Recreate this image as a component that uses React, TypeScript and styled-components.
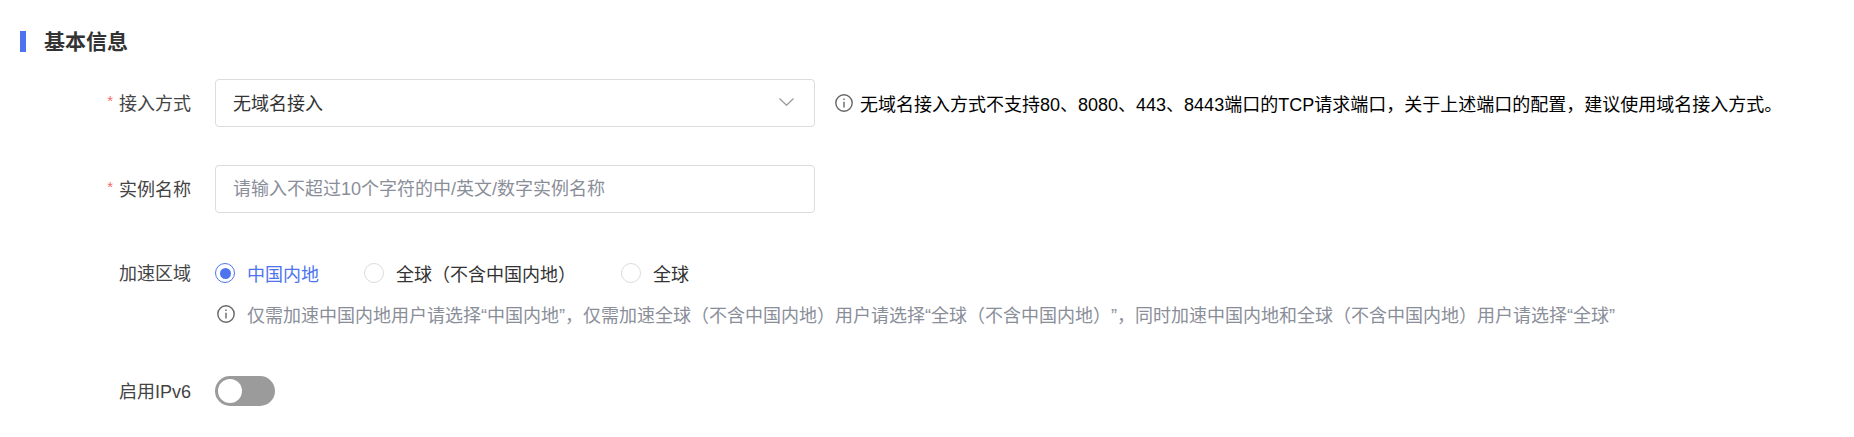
import styled, { createGlobalStyle } from 'styled-components'

const GlobalStyle = createGlobalStyle`
	body {
		margin: 0;
		background: #fff;
		font-family: 'Liberation Sans', 'Noto Sans CJK SC', sans-serif;
		text-spacing-trim: space-all;
	}
`

const Page = styled.div`
	padding: 31px 0 0 20px;
`

const SectionTitle = styled.h2`
	display: flex;
	align-items: flex-start;
	gap: 18px;
	height: 21px;
	margin: 0 0 27px;
	font-size: 21px;
	line-height: 22px;
	font-weight: 700;
	color: #333;
	&::before {
		content: '';
		width: 6px;
		height: 21px;
		background: #4d74ee;
	}
`

const Row = styled.div<{ $gap?: number }>`
	display: flex;
	gap: 24px;
	margin-bottom: ${({ $gap }) => $gap ?? 37}px;
`

const Label = styled.label`
	box-sizing: border-box;
	flex: 0 0 171px;
	display: flex;
	justify-content: flex-end;
	align-items: center;
	gap: 6px;
	height: 48px;
	padding-bottom: 2px;
	font-size: 18px;
	color: #444;
`

const Star = styled.span`
	height: 16px;
	font-size: 15px;
	line-height: 16px;
	color: #f2706b;
	margin-top: -3px;
`

const Control = styled.div`
	display: flex;
	align-items: center;
`

const Stack = styled.div`
	display: flex;
	flex-direction: column;
	padding-bottom: 4px;
`

const SelectBox = styled.div`
	box-sizing: border-box;
	display: flex;
	align-items: center;
	justify-content: space-between;
	width: 600px;
	height: 48px;
	padding: 0 20px 2px 17px;
	border: 1px solid #dcdcdc;
	border-radius: 4px;
	font-size: 18px;
	color: #333;
`

const TextInput = styled.input`
	box-sizing: border-box;
	display: block;
	width: 600px;
	height: 48px;
	padding: 0 17px;
	border: 1px solid #dcdcdc;
	border-radius: 4px;
	outline: none;
	font-family: inherit;
	font-size: 18px;
	color: #333;
	&::placeholder {
		color: #8a8e99;
		opacity: 1;
	}
`

const Tip = styled.div`
	display: flex;
	align-items: center;
	gap: 7px;
	margin-left: 20px;
	font-size: 18px;
	color: #000;
	white-space: nowrap;
`

const RadioGroup = styled.div`
	display: flex;
	align-items: center;
	gap: 45px;
	height: 48px;
`

const RadioItem = styled.div<{ $checked?: boolean }>`
	display: flex;
	align-items: center;
	gap: 12px;
	font-size: 18px;
	color: ${({ $checked }) => ($checked ? '#4d74ee' : '#333')};
`

const RadioCircle = styled.span<{ $checked?: boolean }>`
	box-sizing: border-box;
	display: flex;
	align-items: center;
	justify-content: center;
	width: 20px;
	height: 20px;
	border: ${({ $checked }) => ($checked ? '1.5px solid #4d74ee' : '1px solid #dcdcdc')};
	border-radius: 50%;
	&::after {
		content: '';
		display: ${({ $checked }) => ($checked ? 'block' : 'none')};
		width: 11px;
		height: 11px;
		border-radius: 50%;
		background: #4d74ee;
	}
`

const Hint = styled.div`
	display: flex;
	align-items: center;
	gap: 12px;
	height: 24px;
	margin-top: 5px;
	padding-left: 2px;
	font-size: 18px;
	color: #8a8e99;
	white-space: nowrap;
`

const SwitchTrack = styled.div`
	box-sizing: border-box;
	display: flex;
	align-items: center;
	width: 60px;
	height: 30px;
	padding: 0 3px;
	border-radius: 15px;
	background: #9b9b9b;
	&::before {
		content: '';
		width: 24px;
		height: 24px;
		border-radius: 50%;
		background: #fff;
	}
`

const InfoIcon = () => (
	<svg width="18" height="18" viewBox="0 0 18 18" fill="none" stroke="#666" strokeWidth="1.4">
		<circle cx="9" cy="9" r="8.2" />
		<path d="M9 7.8v5.6" />
		<path d="M9 4.4v1.7" />
	</svg>
)

const Chevron = () => (
	<svg width="15" height="8" viewBox="0 0 15 8" fill="none" stroke="#999" strokeWidth="1.2">
		<path d="M.5.5 7.5 7.3 14.5.5" />
	</svg>
)

const App = () => {
	return (
		<Page>
			<GlobalStyle />
			<SectionTitle>基本信息</SectionTitle>
			<Row $gap={38}>
				<Label>
					<Star>*</Star>接入方式
				</Label>
				<Control>
					<SelectBox>
						无域名接入
						<Chevron />
					</SelectBox>
					<Tip>
						<InfoIcon />
						无域名接入方式不支持80、8080、443、8443端口的TCP请求端口，关于上述端口的配置，建议使用域名接入方式。
					</Tip>
				</Control>
			</Row>
			<Row $gap={36}>
				<Label>
					<Star>*</Star>实例名称
				</Label>
				<TextInput placeholder="请输入不超过10个字符的中/英文/数字实例名称" />
			</Row>
			<Row>
				<Label>加速区域</Label>
				<Stack>
					<RadioGroup>
						<RadioItem $checked>
							<RadioCircle $checked />
							中国内地
						</RadioItem>
						<RadioItem>
							<RadioCircle />
							全球（不含中国内地）
						</RadioItem>
						<RadioItem>
							<RadioCircle />
							全球
						</RadioItem>
					</RadioGroup>
					<Hint>
						<InfoIcon />
						仅需加速中国内地用户请选择“中国内地”，仅需加速全球（不含中国内地）用户请选择“全球（不含中国内地）”，同时加速中国内地和全球（不含中国内地）用户请选择“全球”
					</Hint>
				</Stack>
			</Row>
			<Row>
				<Label>启用IPv6</Label>
				<Control>
					<SwitchTrack />
				</Control>
			</Row>
		</Page>
	)
}

export default App
